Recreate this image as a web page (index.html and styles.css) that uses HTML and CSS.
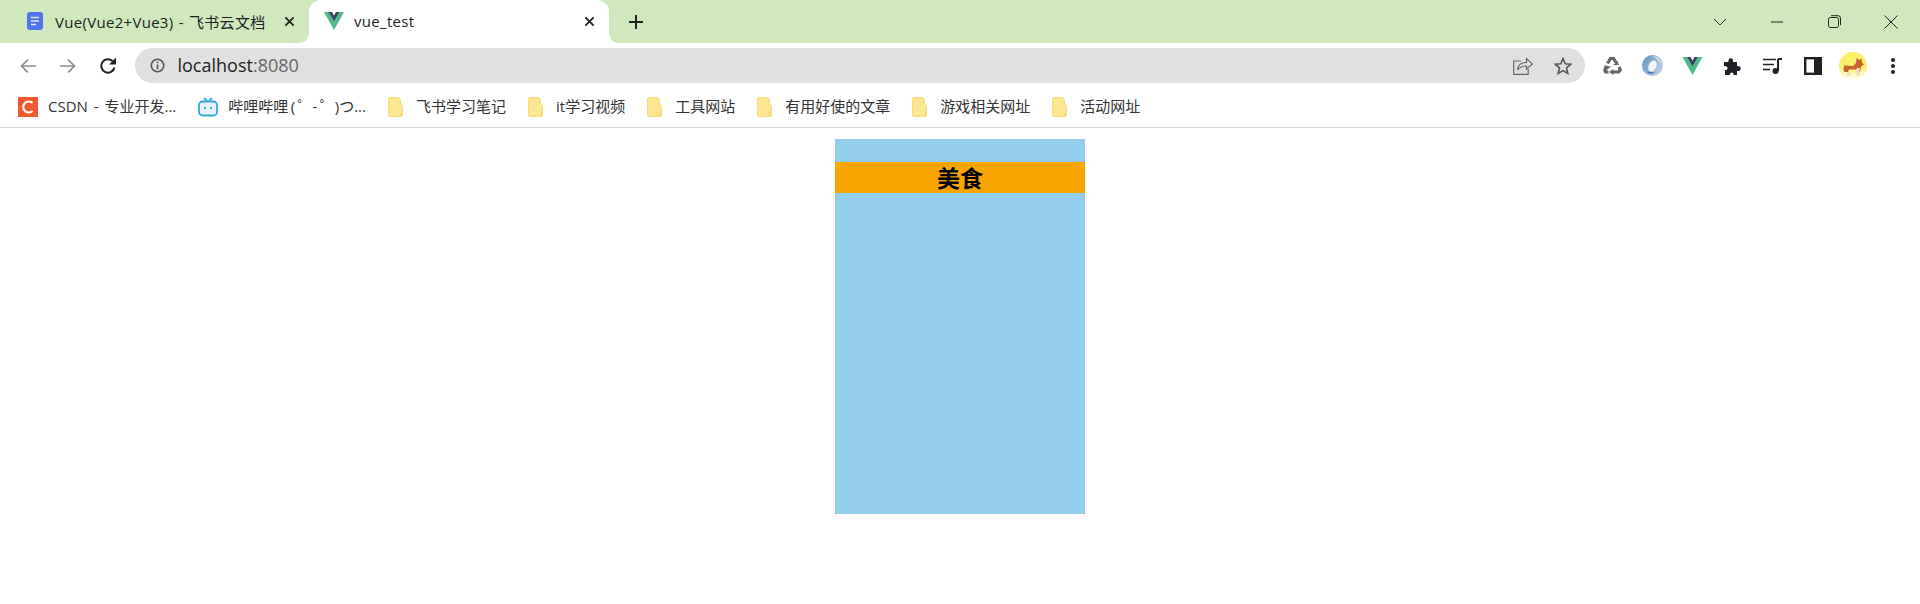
FILE: index.html
```html
<!DOCTYPE html>
<html lang="zh-CN">
<head>
<meta charset="utf-8">
<title>vue_test</title>
<link rel="stylesheet" href="styles.css">
</head>
<body>
<svg class="defs" width="0" height="0" aria-hidden="true">
  <defs>
    <symbol id="vue" viewBox="0 0 20 18"><path d="M0 0h4.500L10 9.500 15.500 0H20L10 18z" fill="#4fb98a"/><path d="M4.500 0h3.500L10 3.500 12 0h3.500L10 9.500z" fill="#35495e"/></symbol>
    <symbol id="folder" viewBox="0 0 15 20"><path d="M2 .5h8.500l2 2.500v5h.5a1.500 1.500 0 0 1 1.500 1.500V18a1.500 1.500 0 0 1-1.500 1.500H2A1.500 1.500 0 0 1 .5 18V2A1.500 1.500 0 0 1 2 .5z" fill="#fce68f" stroke="#f3da7c"/><path d="M11.500 15.500h3V19h-3z" fill="#f7dc78"/></symbol>
    <linearGradient id="halo" x1="0" y1="0" x2="0" y2="1"><stop offset="0.550" stop-color="#fbf06a"/><stop offset="1" stop-color="#ffffff"/></linearGradient>
    <linearGradient id="swirl" x1="0" y1="0" x2="1" y2="0.600"><stop offset="0" stop-color="#5f8fc4"/><stop offset="1" stop-color="#b9cde3"/></linearGradient>
  </defs>
</svg>
<header class="chrome">
  <div class="tabstrip">
    <div class="tab">
      <svg class="favicon" viewBox="0 0 16 18"><rect width="16" height="18" rx="3" fill="#4f75ee"/><path d="M4 5.500h8M4 9h8M4 12.500h5" stroke="#dfe7fd" stroke-width="1.400"/></svg>
      <span class="tab-title">Vue(Vue2+Vue3) - 飞书云文档</span>
      <svg class="tab-close" viewBox="0 0 12 12"><path d="M1.500 1.500l9 9M10.500 1.500l-9 9" stroke="#222" stroke-width="2"/></svg>
    </div>
    <div class="tab tab-active">
      <svg class="favicon-vue"><use href="#vue"/></svg>
      <span class="tab-title">vue_test</span>
      <svg class="tab-close" viewBox="0 0 12 12"><path d="M1.500 1.500l9 9M10.500 1.500l-9 9" stroke="#222" stroke-width="2"/></svg>
    </div>
    <svg class="new-tab" viewBox="0 0 14 14"><path d="M7 0v14M0 7h14" stroke="#222" stroke-width="2"/></svg>
    <div class="window-controls">
      <svg class="win-icon" viewBox="0 0 14 14"><path d="M1 4l6 6 6-6" fill="none" stroke="#333"/></svg>
      <svg class="win-icon" viewBox="0 0 14 14"><path d="M1 7h12" stroke="#222"/></svg>
      <svg class="win-icon" viewBox="0 0 14 14"><rect x="1.500" y="2.500" width="10" height="10" rx="2" fill="none" stroke="#222"/><path d="M4 .7h7a2.500 2.500 0 0 1 2.500 2.500v7" fill="none" stroke="#222"/></svg>
      <svg class="win-icon" viewBox="0 0 14 14"><path d="M.5.500l13 13M13.500.500l-13 13" stroke="#222"/></svg>
    </div>
  </div>
  <div class="toolbar">
    <div class="nav">
      <svg class="nav-icon" viewBox="0 0 18 18"><path d="M17 9H2.500M9 2.500L2.500 9 9 15.500" fill="none" stroke="#8c8c8c" stroke-width="1.700"/></svg>
      <svg class="nav-icon" viewBox="0 0 18 18"><path d="M1 9h14.500M9 2.500L15.500 9 9 15.500" fill="none" stroke="#8c8c8c" stroke-width="1.700"/></svg>
      <svg class="nav-icon" viewBox="0 0 18 18"><path d="M15.500 10.500A6.700 6.700 0 1 1 13.500 4" fill="none" stroke="#222" stroke-width="2"/><path d="M17 .5V7.500H10z" fill="#222"/></svg>
    </div>
    <div class="omnibox">
      <svg class="info-icon" viewBox="0 0 14 14"><circle cx="7" cy="7" r="5.800" fill="none" stroke="#555" stroke-width="1.500"/><path d="M7 6v4.500M7 3.500v1.500" stroke="#555" stroke-width="1.500"/></svg>
      <span class="url">localhost<span class="url-port">:8080</span></span>
      <span class="slot"><svg class="share-icon" viewBox="0 0 20 18"><path d="M8 4H.7v13.300h14.500V12" fill="none" stroke="#666" stroke-width="1.200"/><path d="M4.500 13c.5-5 4-7.500 9-7.500V1.500l6 5.500-6 5V9c-4 0-7 1-9 4z" fill="none" stroke="#666" stroke-width="1.200"/></svg></span>
      <span class="slot"><svg class="star-icon" viewBox="0 0 18 18"><path d="M9 1.500l2.200 5.200 5.600.5-4.300 3.700 1.300 5.500L9 13.600l-4.800 2.800 1.300-5.500L1.200 7.200l5.600-.5z" fill="none" stroke="#555" stroke-width="1.600"/></svg></span>
    </div>
    <div class="extensions">
      <span class="slot"><svg class="ext-recycle" viewBox="0 0 19 19"><g fill="none" stroke="#666" stroke-width="3.200"><path d="M4.500 7.500l3-5h3l2.500 4"/><path d="M5.500 16H2.700L1.800 14l1.700-3.500"/><path d="M10 16h5.500l1.800-2-1.300-3"/></g><g fill="#666"><path d="M16 9l-6 .2 4.500-4.200zM8 10.500L1 9.500 3 14.500zM10.500 13v6L6 16z"/></g></svg></span>
      <span class="slot"><svg class="ext-swirl" viewBox="0 0 21 21"><circle cx="10.500" cy="10.500" r="10.500" fill="url(#swirl)"/><path d="M11 1c5 .5 8.500 4.500 8 9-1-3.500-4-6.500-8-9z" fill="#e4edf6"/><ellipse cx="10.500" cy="11" rx="3.800" ry="5.800" transform="rotate(25 10.500 11)" fill="#f4f8fc"/><path d="M5 17c2.500 2 6 2 8 .5-3 0-6-1-8-.5z" fill="#3f6ea8"/></svg></span>
      <span class="slot"><svg class="ext-vue"><use href="#vue"/></svg></span>
      <span class="slot"><svg class="ext-puzzle" viewBox="0 0 18 18"><path d="M0 5h4.500C3.500 0 10 0 9 5h4v4c5-1 5 6 0 5v4H9.500c1-3.500-4.500-3.500-3.500 0H1v-5c3.500 1 3.500-5-1-4z" fill="#202124"/></svg></span>
      <span class="slot"><svg class="ext-queue" viewBox="0 0 19 16"><path d="M0 1.500h13M0 6.500h11M0 11.500h7" stroke="#202124" stroke-width="1.600"/><path d="M15 1h4M15 1v12" stroke="#202124" stroke-width="2"/><circle cx="12.500" cy="13" r="3" fill="#202124"/></svg></span>
      <span class="slot"><svg class="ext-side" viewBox="0 0 18 18"><rect x="1.200" y="1.200" width="15.600" height="15.600" fill="#fff" stroke="#202124" stroke-width="2.400"/><rect x="10" y="1" width="7" height="16" fill="#202124"/></svg></span>
      <span class="slot"><svg class="avatar" viewBox="0 0 28 28"><circle cx="14" cy="14" r="14" fill="url(#halo)"/><path d="M5 13.500l9 .5 3-3 .5-5 2.500 2 2.500-1.500.5 4 2 2-3 2-1 5.500h-1.500l-1-2.500H10l-1 2.500H5.500L4.500 18z" fill="#c9622b"/><path d="M17.500 16h3.500l-1 8h-2.500zM8.500 20.500h3l-.5 3.500H8z" fill="#e9dcc0"/></svg></span>
      <span class="slot"><svg class="menu-icon" viewBox="0 0 6 16"><circle cx="3" cy="2" r="2" fill="#202124"/><circle cx="3" cy="8" r="2" fill="#202124"/><circle cx="3" cy="14" r="2" fill="#202124"/></svg></span>
    </div>
  </div>
  <nav class="bookmarks">
    <a class="bookmark bm-wide"><svg class="bm-icon" viewBox="0 0 20 20"><rect width="20" height="20" fill="#f0582f"/><path d="M14.500 6A5.500 5.500 0 1 0 14.500 14" fill="none" stroke="#fff" stroke-width="2.200"/></svg>CSDN - 专业开发...</a>
    <a class="bookmark bm-narrow"><svg class="bm-icon" viewBox="0 0 20 20"><path d="M6 1l3 3M14 1l-3 3" stroke="#3aa6dc" stroke-width="1.800"/><rect x="1" y="4.500" width="18" height="14" rx="3.500" fill="#e8f5fb" stroke="#3aa6dc" stroke-width="1.800"/><path d="M7 10v2M13 10v2" stroke="#3aa6dc" stroke-width="2"/></svg>哔哩哔哩 ( ゜- ゜)つ...</a>
    <a class="bookmark"><svg class="folder"><use href="#folder"/></svg>飞书学习笔记</a>
    <a class="bookmark"><svg class="folder"><use href="#folder"/></svg>it学习视频</a>
    <a class="bookmark"><svg class="folder"><use href="#folder"/></svg>工具网站</a>
    <a class="bookmark"><svg class="folder"><use href="#folder"/></svg>有用好使的文章</a>
    <a class="bookmark"><svg class="folder"><use href="#folder"/></svg>游戏相关网址</a>
    <a class="bookmark"><svg class="folder"><use href="#folder"/></svg>活动网址</a>
  </nav>
</header>
<main class="page">
  <section class="panel">
    <h2 class="panel-title">美食</h2>
  </section>
</main>
</body>
</html>
```
FILE: styles.css
```css
* { box-sizing: border-box; }
html, body { margin: 0; height: 100%; overflow: hidden; background: #fff; }
body { font-family: "Open Sans", "Noto Sans CJK SC", sans-serif; color: #222; }
.defs { display: block; height: 0; }
.chrome { border-bottom: 1px solid #d2d2d2; }
.tabstrip { height: 43px; background: #cfe9bd; display: flex; align-items: center; padding-left: 8px; }
.tab { position: relative; width: 301px; height: 43px; display: flex; align-items: center; padding: 0 14px 1px 19px; font-size: 15px; flex: none; }
.tab-active { width: 300px; padding-left: 15px; background: #fff; border-radius: 12px 12px 0 0; }
.tab-active::before, .tab-active::after { content: ""; position: absolute; bottom: 0; width: 9px; height: 9px; }
.tab-active::before { left: -9px; background: radial-gradient(circle at 0 0, transparent 8.500px, #fff 9px); }
.tab-active::after { right: -9px; background: radial-gradient(circle at 100% 0, transparent 8.500px, #fff 9px); }
.favicon { width: 16px; height: 18px; margin-right: 12px; flex: none; }
.favicon-vue { width: 20px; height: 18px; margin-right: 10px; flex: none; }
.tab-title { flex: 1; white-space: nowrap; overflow: hidden; word-spacing: 1px; letter-spacing: .3px; }
.tab-close { width: 11px; height: 11px; flex: none; }
.new-tab { width: 14px; height: 14px; margin-left: 20px; flex: none; }
.window-controls { margin-left: auto; display: flex; align-items: center; gap: 43px; padding-right: 22px; }
.win-icon { width: 14px; height: 14px; display: block; }
.toolbar { height: 45px; display: flex; align-items: center; background: #fff; }
.nav { width: 135px; display: flex; align-items: center; gap: 22px; padding-left: 19px; flex: none; }
.nav-icon { width: 18px; height: 18px; flex: none; }
.omnibox { width: 1450px; height: 35px; border-radius: 18px; background: #e0e0e0; display: flex; align-items: center; padding: 0 2.500px 0 15px; flex: none; }
.info-icon { width: 15px; height: 15px; flex: none; margin-right: 12.500px; }
.url { flex: 1; font-size: 18px; color: #222; padding-bottom: 2px; }
.url-port { color: #666; }
.slot { width: 40px; display: flex; align-items: center; justify-content: center; flex: none; }
.share-icon { width: 20px; height: 18px; }
.star-icon { width: 18px; height: 18px; }
.extensions { flex: 1; display: flex; align-items: center; padding-left: 7.500px; }
.ext-recycle { width: 19px; height: 19px; }
.ext-swirl { width: 21px; height: 21px; }
.ext-vue { width: 21px; height: 18px; }
.ext-puzzle { width: 18px; height: 18px; }
.ext-queue { width: 19px; height: 16px; }
.ext-side { width: 18px; height: 18px; }
.avatar { width: 28px; height: 28px; }
.menu-icon { width: 6px; height: 16px; }
.bookmarks { height: 39px; display: flex; align-items: center; padding: 0 0 4px 18px; gap: 22px; font-size: 15px; color: #333; }
.bookmark { display: flex; align-items: center; white-space: nowrap; }
.bm-wide { word-spacing: 2px; }
.bm-narrow { word-spacing: -1.500px; }
.bm-icon { width: 20px; height: 20px; margin: 2px 10px 0 0; flex: none; }
.folder { width: 15px; height: 20px; margin: 2px 13px 0 0; flex: none; }
.page { padding-top: 11px; }
.panel { width: 250px; height: 375px; margin: 0 auto; padding-top: 23px; background: #93cdec; }
.panel-title { margin: 0; height: 31px; line-height: 31px; background: #f9a500; color: #000; text-align: center; font-size: 23px; font-weight: 700; font-family: "Noto Sans CJK SC", sans-serif; }
```
